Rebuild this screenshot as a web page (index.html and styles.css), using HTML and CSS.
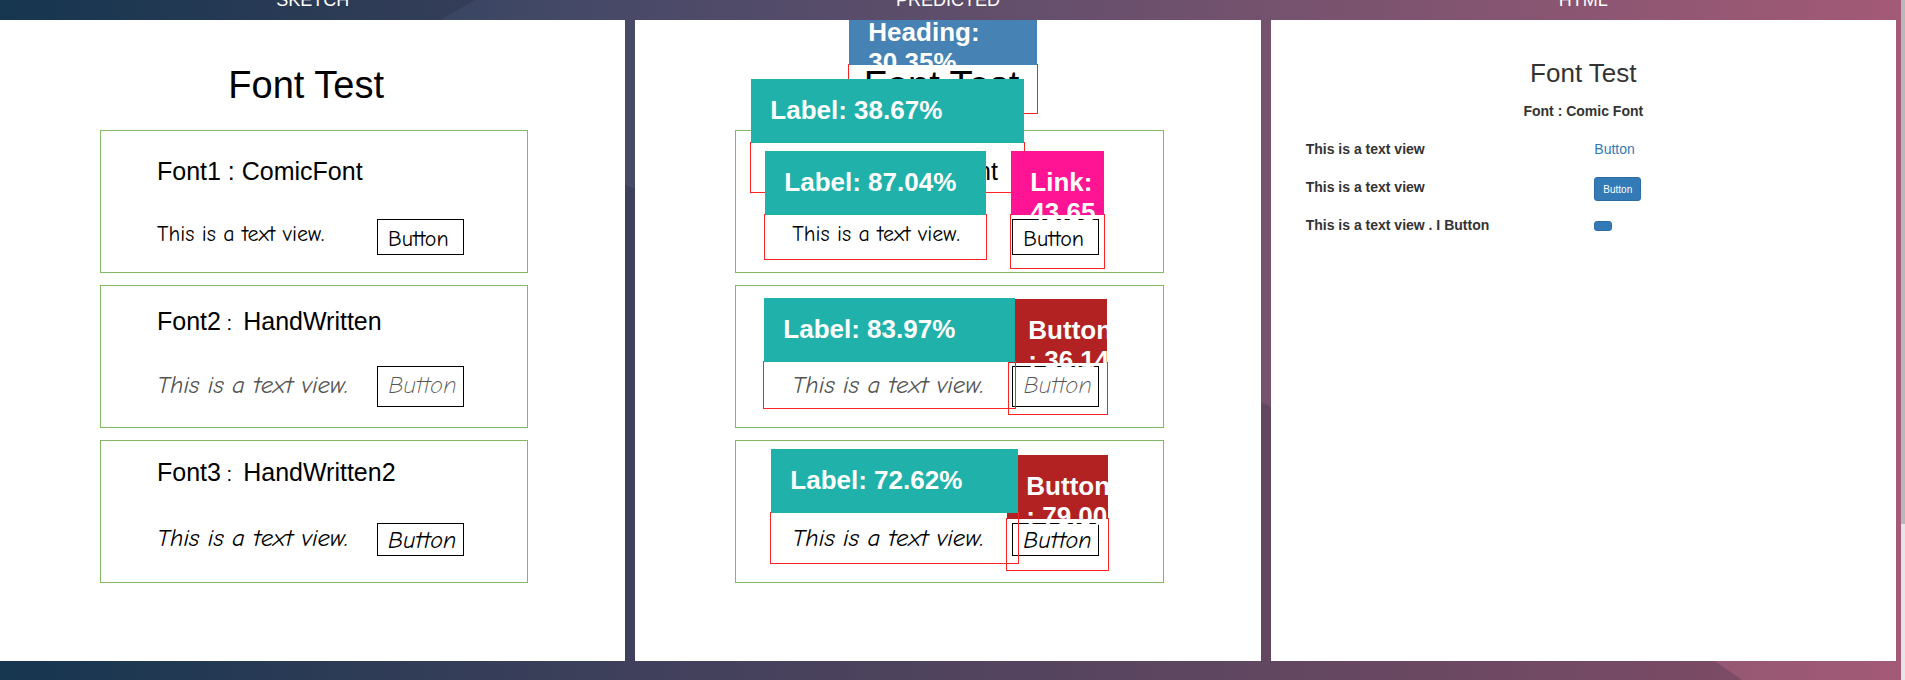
FILE: index.html
```
<!DOCTYPE html>
<html lang="en">
<head>
<meta charset="utf-8">
<title>Sketch to HTML</title>
<link rel="stylesheet" href="styles.css">
</head>
<body>
<svg class="backdrop" viewBox="0 0 1905 680" preserveAspectRatio="none" aria-hidden="true">
  <path d="M0 0H475L440 20L540 120Q590 170 625 185C850 260 1120 320 1260 402C1450 490 1640 480 1715 661L1742 680H0Z" fill="#223" fill-opacity="0.22"/>
</svg>
<main class="compare">
  <section class="column">
    <h2 class="column-title">SKETCH</h2>
    <div class="panel">
      <div class="sketch">
        <h1 class="sketch-title">Font Test</h1>
        <div class="card card-comic">
          <h3 class="card-title">Font1 : ComicFont</h3>
          <div class="card-row"><p class="card-text">This is a text view.</p><button class="card-button">Button</button></div>
        </div>
        <div class="card card-hand">
          <h3 class="card-title">Font2<span class="colon"> :  </span>HandWritten</h3>
          <div class="card-row"><p class="card-text">This is a text view.</p><button class="card-button">Button</button></div>
        </div>
        <div class="card card-script">
          <h3 class="card-title">Font3<span class="colon"> :  </span>HandWritten2</h3>
          <div class="card-row"><p class="card-text">This is a text view.</p><button class="card-button">Button</button></div>
        </div>
      </div>
    </div>
  </section>

  <section class="column">
    <h2 class="column-title">PREDICTED</h2>
    <div class="panel">
      <div class="sketch">
        <h1 class="sketch-title">Font Test</h1>
        <div class="card card-comic">
          <h3 class="card-title">Font1 : ComicFont</h3>
          <div class="card-row"><p class="card-text">This is a text view.</p><button class="card-button">Button</button></div>
        </div>
        <div class="card card-hand">
          <h3 class="card-title">Font2<span class="colon"> :  </span>HandWritten</h3>
          <div class="card-row"><p class="card-text">This is a text view.</p><button class="card-button">Button</button></div>
        </div>
        <div class="card card-script">
          <h3 class="card-title">Font3<span class="colon"> :  </span>HandWritten2</h3>
          <div class="card-row"><p class="card-text">This is a text view.</p><button class="card-button">Button</button></div>
        </div>
      </div>
      <div class="box box-heading"><div class="tag tag-heading">Heading:<br>30.35%</div></div>
      <div class="box box-label-a"><div class="tag tag-label">Label: 38.67%</div></div>
      <div class="box box-label-b"><div class="tag tag-label">Label: 87.04%</div></div>
      <div class="box box-link"><div class="tag tag-link">Link:<br>43.65</div></div>
      <div class="box box-button-a"><div class="tag tag-button">Button<br>: 36.14</div></div>
      <div class="box box-label-c"><div class="tag tag-label">Label: 83.97%</div></div>
      <div class="box box-button-b"><div class="tag tag-button">Button<br>: 79.00</div></div>
      <div class="box box-label-d"><div class="tag tag-label">Label: 72.62%</div></div>
    </div>
  </section>

  <section class="column">
    <h2 class="column-title">HTML</h2>
    <div class="panel">
      <div class="output">
        <h1 class="output-title">Font Test</h1>
        <p class="output-label output-center">Font : Comic Font</p>
        <div class="output-row"><p class="output-label">This is a text view</p><div><a class="output-link" href="#">Button</a></div></div>
        <div class="output-row"><p class="output-label">This is a text view</p><div><button class="output-button">Button</button></div></div>
        <div class="output-row"><p class="output-label">This is a text view . I Button</p><div><button class="output-button output-empty" aria-label="Empty"></button></div></div>
      </div>
    </div>
  </section>
</main>
<div class="scrollbar"><div class="scrollbar-thumb"></div></div>
</body>
</html>
```
FILE: styles.css
```
* {
  box-sizing: border-box;
}

body {
  margin: 0;
  min-height: 100vh;
  display: flex;
  position: relative;
  overflow: hidden;
  font-family: "Liberation Sans", Arial, sans-serif;
  background: linear-gradient(90deg, #143c58 0%, #4a4a68 34%, #75526e 67%, #a35a76 100%);
}

h1, h2, h3, p {
  margin: 0;
  font-weight: 400;
}

.backdrop {
  position: absolute;
  inset: 0;
  width: 100%;
  height: 100%;
}

.compare {
  position: relative;
  flex: 1;
  display: grid;
  grid-template-columns: repeat(3, minmax(0, 1fr));
  gap: 10px;
  padding: 0 5px 19px 0;
}

.column {
  display: flex;
  flex-direction: column;
}

.column-title {
  height: 20px;
  display: flex;
  align-items: flex-end;
  justify-content: center;
  padding-bottom: 10px;
  font-size: 18px;
  line-height: 20px;
  color: #fff;
}

.panel {
  flex: 1;
  position: relative;
  overflow: hidden;
  background: #fff;
}

/* Sketch */

.sketch {
  padding: 43px 97px 0 100px;
  color: #000;
}

.sketch-title {
  margin-bottom: 23px;
  padding-right: 16px;
  text-align: center;
  font-size: 38px;
  line-height: 44px;
}

.card {
  height: 143px;
  margin-bottom: 12px;
  padding-left: 56px;
  border: 1px solid #82b866;
}

.card-title {
  font-size: 25px;
  line-height: 30px;
  white-space: pre;
}

.colon {
  font-size: 20px;
}

.card-row {
  display: flex;
  align-items: flex-start;
  font-family: "Comic Sans MS", "Comic Neue", "Open Sans", sans-serif;
}

.card-text {
  width: 220px;
  line-height: 30px;
  white-space: nowrap;
}

.card-button {
  width: 87px;
  padding: 0 0 0 10px;
  border: 1px solid #000;
  background: none;
  color: inherit;
  font: inherit;
  text-align: left;
}

.card-comic {
  padding-top: 25px;
}

.card-comic .card-row {
  margin-top: 33px;
  font-size: 22px;
}

.card-comic .card-button {
  height: 36px;
  padding-top: 4px;
}

.card-hand {
  padding-top: 20px;
}

.card-hand .card-row {
  margin-top: 28px;
  font-size: 25px;
  font-style: italic;
  font-weight: 300;
  color: #555;
}

.card-hand .card-text {
  padding-top: 4px;
}

.card-hand .card-button {
  height: 41px;
  padding-bottom: 4px;
  border-color: #000;
  font-size: 24px;
}

.card-script {
  margin-bottom: 0;
  padding-top: 16px;
}

.card-script .card-row {
  margin-top: 34px;
  font-size: 25px;
  font-style: italic;
}

.card-script .card-button {
  height: 33px;
  font-size: 24px;
}

/* Detection boxes, placed over the sketch */

.box {
  position: absolute;
  border: 1px solid #f22;
}

.tag {
  position: absolute;
  left: 0;
  right: 0;
  bottom: 100%;
  height: 64px;
  padding: 16px 0 0 19px;
  font-size: 26px;
  font-weight: 700;
  line-height: 30px;
  color: #fff;
  white-space: nowrap;
  overflow-x: clip;
}

.tag-heading { background: #4682b4; }
.tag-label { background: #20b2aa; }
.tag-link { background: #ff1493; }
.tag-button { background: #b22222; }

.box-heading { left: 213px; top: 44px; width: 190px; height: 50px; }
.box-label-a { left: 115px; top: 122px; width: 275px; height: 51px; }
.box-label-b { left: 129px; top: 194px; width: 223px; height: 46px; }
.box-link { left: 375px; top: 194px; width: 95px; height: 55px; }
.box-button-a { left: 373px; top: 342px; width: 100px; height: 53px; }
.box-label-c { left: 128px; top: 341px; width: 253px; height: 48px; }
.box-button-b { left: 371px; top: 498px; width: 103px; height: 53px; }
.box-label-d { left: 135px; top: 492px; width: 249px; height: 52px; }

/* Generated page */

.output {
  padding-top: 38px;
  color: #333;
}

.output-title {
  text-align: center;
  font-size: 26px;
  line-height: 30px;
}

.output-label {
  font-size: 14px;
  font-weight: 700;
  line-height: 20px;
}

.output-center {
  margin: 13px 0 18px;
  text-align: center;
}

.output-row {
  height: 38px;
  display: grid;
  grid-template-columns: 1fr 1fr;
  padding: 0 13px 0 35px;
}

.output-link {
  font-size: 14px;
  line-height: 20px;
  color: #337ab7;
  text-decoration: none;
}

.output-button {
  display: block;
  height: 24px;
  padding: 0 8px;
  border: 1px solid #2e6da4;
  border-radius: 3px;
  background: #337ab7;
  font-family: inherit;
  font-size: 10px;
  color: #fff;
}

.output-empty {
  height: 10px;
  margin-top: 6px;
}

/* Page scrollbar */

.scrollbar {
  position: relative;
  width: 4px;
  background: #e6e6e6;
}

.scrollbar-thumb {
  height: 77vh;
  background: #b8b8b8;
}
```
